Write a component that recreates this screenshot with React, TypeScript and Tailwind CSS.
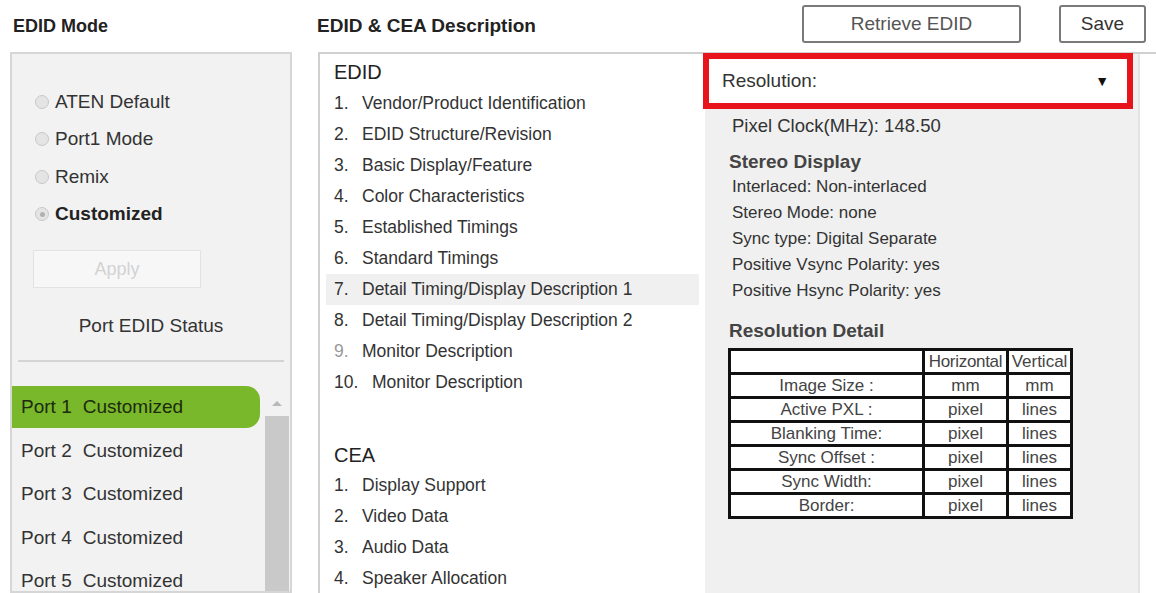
import React from "react";

const edidItems = [
  "Vendor/Product Identification",
  "EDID Structure/Revision",
  "Basic Display/Feature",
  "Color Characteristics",
  "Established Timings",
  "Standard Timings",
  "Detail Timing/Display Description 1",
  "Detail Timing/Display Description 2",
  "Monitor Description",
  "Monitor Description",
];
const ceaItems = ["Display Support", "Video Data", "Audio Data", "Speaker Allocation"];
const modes = [
  { label: "ATEN Default", on: false },
  { label: "Port1 Mode", on: false },
  { label: "Remix", on: false },
  { label: "Customized", on: true },
];
const stereo = [
  "Interlaced: Non-interlaced",
  "Stereo Mode: none",
  "Sync type: Digital Separate",
  "Positive Vsync Polarity: yes",
  "Positive Hsync Polarity: yes",
];
const detail = [
  ["Image Size :", "mm", "mm"],
  ["Active PXL :", "pixel", "lines"],
  ["Blanking Time:", "pixel", "lines"],
  ["Sync Offset :", "pixel", "lines"],
  ["Sync Width:", "pixel", "lines"],
  ["Border:", "pixel", "lines"],
];

function Radio({ on }: { on: boolean }) {
  return (
    <span className="w-[14px] h-[14px] rounded-full border border-[#c8c8c8] bg-[#e4e4e4] flex items-center justify-center shrink-0">
      {on && <span className="w-[5px] h-[5px] rounded-full bg-[#b0b0b0]" />}
    </span>
  );
}

export default function App() {
  return (
    <div className="w-[1156px] h-[593px] overflow-hidden bg-white text-[#333] font-['Liberation_Sans',Arial,sans-serif] flex pl-[10px]">
      {/* EDID mode column */}
      <div className="w-[282px] shrink-0 flex flex-col">
        <div className="h-[52px] shrink-0 flex items-center pl-[3px] text-[18px] font-bold text-[#222]">EDID Mode</div>
        <div className="flex-1 min-h-0 overflow-hidden border-2 border-[#d6d6d6] bg-[#f2f2f2] flex flex-col">
          <div className="pt-[29px] pl-[21px] flex flex-col">
            {modes.map((m) => (
              <label key={m.label} className="h-[37.5px] flex items-center gap-[6px] pl-[2px]">
                <Radio on={m.on} />
                <span className={`text-[19px] ${m.on ? "font-bold text-[#222]" : "text-[#333]"}`}>{m.label}</span>
              </label>
            ))}
            <button className="mt-[17px] w-[168px] h-[38px] border border-[#e2e2e2] bg-[#f7f7f7] text-[18px] text-[#d2d2d2]">Apply</button>
          </div>
          <div className="h-[72px] shrink-0 flex items-center justify-center text-[19px] text-[#333] pt-[4px]">Port EDID Status</div>
          <div className="mx-[6px] border-t-2 border-[#d4d4d4]" />
          <div className="mt-[24px] flex flex-1">
            <div className="w-[248px] flex flex-col">
              {[1, 2, 3, 4, 5].map((n) => (
                <div
                  key={n}
                  className={`shrink-0 flex items-center pl-[9px] text-[19px] ${n === 1 ? "bg-[#78b82a] rounded-r-[14px] h-[42px] mb-[1px] text-[#1d2a10]" : "h-[43.5px] text-[#333]"}`}
                >
                  <span>Port {n}</span>
                  <span className="ml-[11px]">Customized</span>
                </div>
              ))}
            </div>
            <div className="ml-[5px] w-[24px] flex flex-col items-center">
              <div className="h-[30px] shrink-0 w-full flex items-end justify-center pb-[10px]">
                <svg width="10" height="6" viewBox="0 0 10 6"><path d="M0 6 L5 1 L10 6 Z" fill="#b8b8b8" /></svg>
              </div>
              <div className="flex-1 w-full bg-[#c9c9c9]" />
            </div>
          </div>
        </div>
      </div>

      {/* EDID & CEA column */}
      <div className="ml-[26px] flex-1 flex flex-col">
        <div className="h-[52px] shrink-0 flex items-start">
          <div className="w-[485px] h-[52px] flex items-center text-[19px] font-bold text-[#222] -ml-[1px]">EDID &amp; CEA Description</div>
          <button className="mt-[5px] w-[219px] h-[38px] border-2 border-[#7a7a7a] rounded-[3px] bg-white text-[19px] text-[#555]">Retrieve EDID</button>
          <button className="mt-[5px] ml-[38px] w-[87px] h-[38px] border-2 border-[#7a7a7a] rounded-[3px] bg-white text-[19px] text-[#333]">Save</button>
        </div>
        <div className="flex-1 min-h-0 flex border-t-2 border-l-2 border-[#d0d0d0]">
          <div className="w-[385px] bg-white pt-[3px]">
            <div className="pl-[14px] h-[30px] flex items-center text-[20px] text-[#222]">EDID</div>
            <div className="mt-[1px] flex flex-col">
              {edidItems.map((t, i) => (
                <div key={i} className={`mx-[6px] h-[31px] flex items-center pl-[8px] text-[17.5px] ${i === 6 ? "bg-[#f0f0f0]" : ""}`}>
                  <span className={`w-[28px] ${i === 8 ? "text-[#999]" : ""}`}>{i + 1}.</span>
                  <span className={i === 9 ? "ml-[10px]" : ""}>{t}</span>
                </div>
              ))}
            </div>
            <div className="pl-[14px] mt-[42px] h-[30px] flex items-center text-[20px] text-[#222]">CEA</div>
            <div className="flex flex-col">
              {ceaItems.map((t, i) => (
                <div key={i} className="mx-[6px] h-[31px] flex items-center pl-[8px] text-[17.5px]">
                  <span className="w-[28px]">{i + 1}.</span>
                  <span>{t}</span>
                </div>
              ))}
            </div>
          </div>
          <div className="w-[435px] bg-[#f0f0f0] border-r-2 border-[#e4e4e4] flex flex-col">
            <div className="-ml-[2px] mt-[-1px] w-[430px] h-[56px] shrink-0 border-[6px] border-[#e8141c] bg-white flex items-center justify-between pl-[13px] pr-[18px]">
              <span className="text-[19px] text-[#333]">Resolution:</span>
              <span className="text-[14px] text-[#111]">▼</span>
            </div>
            <div className="pl-[27px] flex flex-col">
              <div className="h-[34px] flex items-center text-[18.5px] text-[#333]">Pixel Clock(MHz): 148.50</div>
              <div className="mt-[7px] h-[24px] flex items-center -ml-[3px] text-[19px] font-bold text-[#444]">Stereo Display</div>
              {stereo.map((s) => (
                <div key={s} className="h-[26px] flex items-center text-[17px] text-[#333]">{s}</div>
              ))}
              <div className="mt-[14px] h-[26px] flex items-center -ml-[3px] text-[19px] font-bold text-[#444]">Resolution Detail</div>
              <table className="mt-[4px] -ml-[4px] w-[345px] border-collapse text-[17px] text-[#444] bg-white">
                <tbody>
                  <tr className="h-[24px]">
                    <td className="w-[194px] border-[3px] border-[#111]" />
                    <td className="w-[84px] border-[3px] border-[#111] text-center leading-none tracking-[-0.3px]">Horizontal</td>
                    <td className="border-[3px] border-[#111] text-center leading-none">Vertical</td>
                  </tr>
                  {detail.map((r) => (
                    <tr key={r[0]} className="h-[24px]">
                      {r.map((c, j) => (
                        <td key={j} className="border-[3px] border-[#111] text-center leading-none">{c}</td>
                      ))}
                    </tr>
                  ))}
                </tbody>
              </table>
            </div>
          </div>
        </div>
      </div>
    </div>
  );
}
